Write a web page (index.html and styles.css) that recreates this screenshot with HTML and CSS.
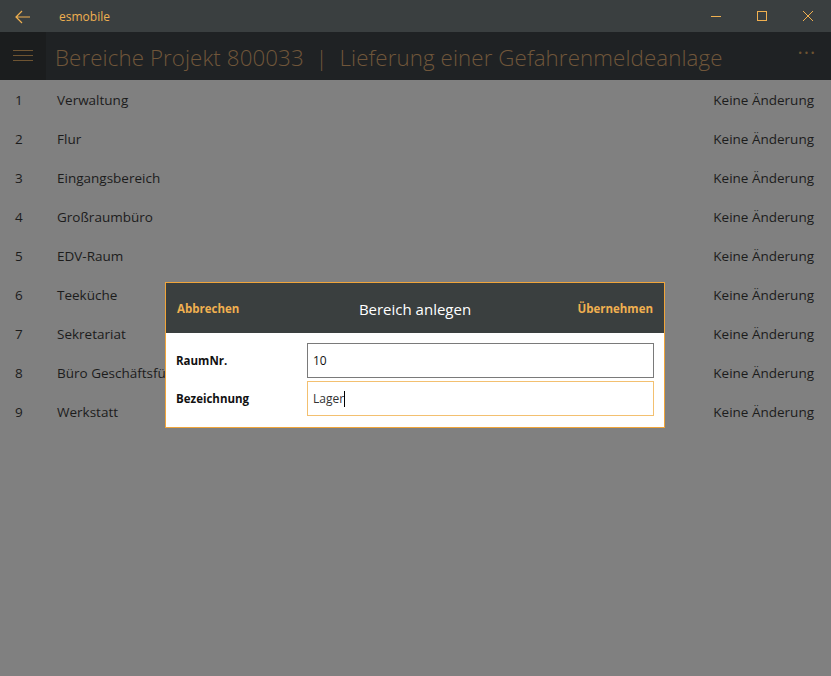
FILE: index.html
```html
<!DOCTYPE html>
<html lang="de">
<head>
<meta charset="utf-8">
<title>esmobile</title>
<link rel="stylesheet" href="styles.css">
</head>
<body>
<div class="app">
  <div class="titlebar">
    <div class="tb-back">
      <svg width="16" height="14" viewBox="0 0 16 14"><path d="M7 1 L1 7 L7 13 M1 7 H15" fill="none" stroke="#f0b050" stroke-width="1.2"/></svg>
    </div>
    <div class="tb-title">esmobile</div>
    <div class="tb-controls">
      <div class="tb-btn"><svg width="12" height="12" viewBox="0 0 12 12"><path d="M1 6.5 H11" stroke="#f0b050" stroke-width="1"/></svg></div>
      <div class="tb-btn"><svg width="12" height="12" viewBox="0 0 12 12"><rect x="1.5" y="1.5" width="9" height="9" fill="none" stroke="#f0b050" stroke-width="1"/></svg></div>
      <div class="tb-btn"><svg width="12" height="12" viewBox="0 0 12 12"><path d="M1 1 L11 11 M11 1 L1 11" stroke="#f0b050" stroke-width="1"/></svg></div>
    </div>
  </div>
  <div class="header">
    <div class="hamburger">
      <svg width="20" height="12" viewBox="0 0 20 12"><path d="M0 0.5 H20 M0 5.5 H20 M0 10.5 H20" stroke="#6e5432" stroke-width="1"/></svg>
    </div>
    <div class="page-title">Bereiche Projekt 800033&nbsp; |&nbsp; Lieferung einer Gefahrenmeldeanlage</div>
    <div class="more">&middot;&middot;&middot;</div>
  </div>
  <div class="list">
    <div class="row"><span class="num">1</span><span class="name">Verwaltung</span><span class="status">Keine Änderung</span></div>
    <div class="row"><span class="num">2</span><span class="name">Flur</span><span class="status">Keine Änderung</span></div>
    <div class="row"><span class="num">3</span><span class="name">Eingangsbereich</span><span class="status">Keine Änderung</span></div>
    <div class="row"><span class="num">4</span><span class="name">Großraumbüro</span><span class="status">Keine Änderung</span></div>
    <div class="row"><span class="num">5</span><span class="name">EDV-Raum</span><span class="status">Keine Änderung</span></div>
    <div class="row"><span class="num">6</span><span class="name">Teeküche</span><span class="status">Keine Änderung</span></div>
    <div class="row"><span class="num">7</span><span class="name">Sekretariat</span><span class="status">Keine Änderung</span></div>
    <div class="row"><span class="num">8</span><span class="name">Büro Geschäftsführung</span><span class="status">Keine Änderung</span></div>
    <div class="row"><span class="num">9</span><span class="name">Werkstatt</span><span class="status">Keine Änderung</span></div>
  </div>
  <div class="dialog">
    <div class="dlg-head">
      <span class="dlg-action">Abbrechen</span>
      <span class="dlg-title">Bereich anlegen</span>
      <span class="dlg-action">Übernehmen</span>
    </div>
    <div class="dlg-body">
      <div class="field">
        <span class="label">RaumNr.</span>
        <div class="input">10</div>
      </div>
      <div class="field">
        <span class="label">Bezeichnung</span>
        <div class="input focused">Lager<span class="caret"></span></div>
      </div>
    </div>
  </div>
</div>
</body>
</html>
```
FILE: styles.css
```css
html, body {
  margin: 0;
  padding: 0;
}
body {
  width: 831px;
  height: 676px;
  overflow: hidden;
  background: #808080;
  font-family: "Open Sans", "Noto Sans", sans-serif;
}
.app {
  position: relative;
  width: 831px;
  height: 676px;
  display: flex;
  flex-direction: column;
}
.titlebar {
  height: 32px;
  background: #3a3f40;
  display: flex;
  align-items: center;
  flex: none;
}
.tb-back {
  width: 46px;
  display: flex;
  justify-content: center;
  padding-top: 1px;
}
.tb-title {
  margin-left: 13px;
  color: #f0b050;
  font-size: 12px;
  flex: 1;
}
.tb-controls {
  display: flex;
}
.tb-btn {
  width: 46px;
  height: 32px;
  display: flex;
  align-items: center;
  justify-content: center;
}
.header {
  height: 48px;
  background: #1f2224;
  display: flex;
  align-items: center;
  flex: none;
}
.hamburger {
  width: 46px;
  height: 48px;
  background: #1b1d1e;
  display: flex;
  align-items: center;
  justify-content: center;
}
.page-title {
  margin-left: 9px;
  color: #70563a;
  font-size: 22.3px;
  font-weight: 300;
  letter-spacing: 0.1px;
  flex: 1;
  white-space: nowrap;
  padding-top: 2px;
}
.more {
  width: 48px;
  color: #6e5432;
  font-size: 20px;
  letter-spacing: 1px;
  text-align: center;
  padding-bottom: 8px;
}
.list {
  display: flex;
  flex-direction: column;
}
.row {
  height: 39px;
  display: flex;
  align-items: center;
  font-size: 13.5px;
  color: #1c1c1c;
}
.num {
  width: 42px;
  padding-left: 15px;
}
.name {
  flex: 1;
}
.status {
  padding-right: 17px;
}
.dialog {
  position: absolute;
  left: 165px;
  top: 282px;
  width: 498px;
  border: 1px solid #f0a53a;
  background: #ffffff;
}
.dlg-head {
  height: 50px;
  background: #3a3f3f;
  display: flex;
  align-items: center;
  justify-content: space-between;
  padding: 0 11px;
}
.dlg-action {
  color: #f0b050;
  font-size: 11.5px;
  font-weight: 700;
  width: 90px;
}
.dlg-action:last-child {
  text-align: right;
}
.dlg-title {
  color: #ffffff;
  font-size: 15px;
  padding-top: 2px;
}
.dlg-body {
  padding: 10px 10px 11px 10px;
  display: flex;
  flex-direction: column;
  gap: 3px;
}
.field {
  display: flex;
  align-items: center;
}
.label {
  width: 131px;
  font-size: 11.5px;
  font-weight: 700;
  color: #111;
}
.input {
  flex: 1;
  height: 33px;
  border: 1px solid #7a7a7a;
  box-sizing: content-box;
  display: flex;
  align-items: center;
  padding-left: 5px;
  font-size: 12px;
  color: #111;
}
.input.focused {
  border-color: #f3c070;
  color: #333;
}
.caret {
  display: inline-block;
  width: 1px;
  height: 16px;
  background: #000;
}
```
